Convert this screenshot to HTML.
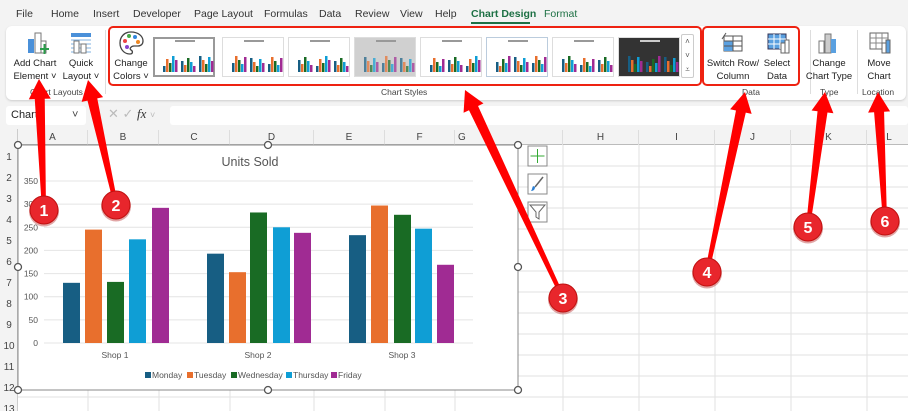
<!DOCTYPE html>
<html><head><meta charset="utf-8"><style>
*{margin:0;padding:0;box-sizing:border-box}
body{width:908px;height:411px;overflow:hidden;background:#f3f3f3;font-family:"Liberation Sans",sans-serif;position:relative;color:#222}
.a{position:absolute}
.tab{position:absolute;top:8px;font-size:10.5px;color:#333;white-space:nowrap}
.rb{position:absolute;font-size:9.5px;text-align:center;line-height:13px;color:#222;white-space:nowrap}
.gl{position:absolute;font-size:8.5px;color:#444;top:87px;white-space:nowrap}
.th{position:absolute;top:37px;width:62px;height:40px;background:#fff;border:1px solid #ddd}
.col{position:absolute;top:130px;height:15px;font-size:10px;color:#444;text-align:center;line-height:15px;border-right:1px solid #ddd}
</style></head><body>
<div class="tab" style="left:16px">File</div>
<div class="tab" style="left:51px">Home</div>
<div class="tab" style="left:93px">Insert</div>
<div class="tab" style="left:133px">Developer</div>
<div class="tab" style="left:194px">Page Layout</div>
<div class="tab" style="left:264px">Formulas</div>
<div class="tab" style="left:319px">Data</div>
<div class="tab" style="left:355px">Review</div>
<div class="tab" style="left:400px">View</div>
<div class="tab" style="left:435px">Help</div>
<div class="tab" style="left:471px;color:#1d7044;font-weight:bold">Chart Design</div>
<div class="a" style="left:471px;top:22px;width:59px;height:2px;background:#1d7044"></div>
<div class="tab" style="left:544px;color:#1d7044">Format</div>
<div class="a" style="left:6px;top:26px;width:900px;height:74px;background:#fff;border-radius:6px;box-shadow:0 1px 2px #ccc"></div>
<div class="a" style="left:105px;top:30px;width:1px;height:64px;background:#ddd"></div>
<div class="a" style="left:810px;top:30px;width:1px;height:64px;background:#ddd"></div>
<div class="a" style="left:857px;top:30px;width:1px;height:64px;background:#ddd"></div>
<svg class="a" style="left:26px;top:31px" width="24" height="24"><rect x="2" y="8" width="6" height="14" fill="#4a90d9"/><rect x="9" y="2" width="6" height="20" fill="#fff" stroke="#777"/><rect x="15" y="10" width="5" height="12" fill="#fff" stroke="#777"/><path d="M14 18h9M18.5 13v10" stroke="#2a9d4a" stroke-width="2"/></svg>
<svg class="a" style="left:69px;top:31px" width="24" height="24"><rect x="2" y="2" width="20" height="4" fill="#4a90d9"/><path d="M2 9h20M2 13h20M2 17h20M2 21h20" stroke="#7fb0e0"/><rect x="5" y="10" width="5" height="12" fill="#fff" stroke="#777"/><rect x="12" y="13" width="5" height="9" fill="#fff" stroke="#777"/></svg>
<div class="rb" style="left:10px;top:57px;width:50px">Add Chart<br>Element ˅</div>
<div class="rb" style="left:60px;top:57px;width:42px">Quick<br>Layout ˅</div>
<div class="gl" style="left:30px">Chart Layouts</div>
<svg class="a" style="left:118px;top:30px" width="26" height="26"><path d="M13 2C6 2 2 7 2 13s4 11 10 11c3 0 3-3 1-4s0-4 3-4h4c3 0 5-2 5-5C25 6 20 2 13 2z" fill="#fff" stroke="#444" stroke-width="1.3"/><circle cx="7" cy="11" r="2" fill="#e44"/><circle cx="11" cy="6" r="2" fill="#4a4"/><circle cx="17" cy="7" r="2" fill="#38d"/><circle cx="20" cy="12" r="2" fill="#e82"/><circle cx="9" cy="17" r="2" fill="#84c"/></svg>
<div class="rb" style="left:110px;top:57px;width:42px">Change<br>Colors ˅</div>
<div class="th" style="left:153px;border:2px solid #999"></div>
<div class="th" style="left:222px"></div>
<div class="th" style="left:288px"></div>
<div class="th" style="left:354px;background:#d0d0d0"></div>
<div class="th" style="left:420px"></div>
<div class="th" style="left:486px;border-color:#bcd"></div>
<div class="th" style="left:552px"></div>
<div class="th" style="left:618px;background:#333"></div>
<svg class="a" style="left:0;top:0" width="700" height="80" id="thumbs"></svg>
<div class="a" style="left:681px;top:34px;width:13px;height:44px;border:1px solid #ccc;border-radius:2px;background:#fff;font-size:8px;text-align:center;line-height:14px;color:#555">˄<br>˅<br>⩡</div>
<div class="gl" style="left:381px">Chart Styles</div>
<svg class="a" style="left:720px;top:31px" width="24" height="24"><rect x="4" y="5" width="18" height="15" fill="#fff" stroke="#555"/><rect x="4" y="10" width="9" height="10" fill="#5aa0e0"/><path d="M4 10h18M4 15h18M13 5v15" stroke="#555"/><path d="M2 8l4-6" stroke="#555"/></svg>
<svg class="a" style="left:766px;top:31px" width="24" height="24"><rect x="2" y="3" width="18" height="15" fill="#5aa0e0" stroke="#335"/><path d="M2 8h18M2 13h18M8 3v15M14 3v15" stroke="#fff"/><rect x="15" y="12" width="4" height="10" fill="#fff" stroke="#666"/><rect x="19" y="9" width="4" height="13" fill="#fff" stroke="#666"/></svg>
<div class="rb" style="left:704px;top:57px;width:58px">Switch Row/<br>Column</div>
<div class="rb" style="left:760px;top:57px;width:34px">Select<br>Data</div>
<div class="gl" style="left:742px">Data</div>
<svg class="a" style="left:816px;top:31px" width="24" height="24"><rect x="3" y="10" width="5" height="12" fill="#fff" stroke="#777"/><rect x="9" y="3" width="6" height="19" fill="#ccc" stroke="#777"/><rect x="15" y="8" width="5" height="14" fill="#5aa0e0"/></svg>
<div class="rb" style="left:801px;top:57px;width:56px">Change<br>Chart Type</div>
<div class="gl" style="left:820px">Type</div>
<svg class="a" style="left:868px;top:31px" width="24" height="24"><rect x="2" y="2" width="18" height="16" fill="#fff" stroke="#666"/><path d="M2 7h18M2 12h18M8 2v16M14 2v16" stroke="#888"/><rect x="14" y="12" width="4" height="10" fill="#fff" stroke="#666"/><rect x="18" y="9" width="4" height="13" fill="#5aa0e0" stroke="#666"/></svg>
<div class="rb" style="left:860px;top:57px;width:38px">Move<br>Chart</div>
<div class="gl" style="left:862px">Location</div>
<div class="a" style="left:108px;top:26px;width:594px;height:60px;border:2px solid #e21;border-radius:5px"></div>
<div class="a" style="left:702px;top:26px;width:98px;height:60px;border:2px solid #e21;border-radius:5px"></div>
<div class="a" style="left:6px;top:106px;width:80px;height:19px;background:#fff;border-radius:3px;font-size:11px;line-height:19px;padding-left:5px">Chart<span style="position:absolute;left:66px;color:#444">˅</span></div>
<div class="a" style="left:108px;top:106px;font-size:13px;color:#bbb;white-space:nowrap">✕ ✓ <i style="color:#333;font-family:'Liberation Serif'">fx</i> <span style="font-size:9px">˅</span></div>
<div class="a" style="left:170px;top:106px;width:738px;height:19px;background:#fff;border-radius:3px"></div>
<div class="a" style="left:0;top:129px;width:908px;height:282px;background:#fff"></div>
<div class="a" style="left:0;top:129px;width:908px;height:16px;background:#f3f3f3;border-bottom:1px solid #bbb"></div>
<div class="a" style="left:0;top:129px;width:18px;height:282px;background:#f3f3f3;border-right:1px solid #ccc"></div>
<div class="col" style="left:18px;width:70px">A</div><div class="col" style="left:88px;width:71px">B</div><div class="col" style="left:159px;width:71px">C</div><div class="col" style="left:230px;width:84px">D</div><div class="col" style="left:314px;width:71px">E</div><div class="col" style="left:385px;width:70px">F</div><div class="col" style="left:455px;width:108px;text-align:left;padding-left:3px">G</div><div class="col" style="left:563px;width:76px">H</div><div class="col" style="left:639px;width:76px">I</div><div class="col" style="left:715px;width:76px">J</div><div class="col" style="left:791px;width:76px">K</div><div class="col" style="left:867px;width:45px">L</div>
<svg class="a" style="left:0;top:0" width="908" height="411" id="ch" font-family="Liberation Sans, sans-serif"></svg>
<script>
var ns="http://www.w3.org/2000/svg";
function el(p,t,a,txt){var e=document.createElementNS(ns,t);for(var k in a)e.setAttribute(k,a[k]);if(txt!=null)e.textContent=txt;p.appendChild(e);return e}
var g=document.getElementById('ch');
var cols=[88,159,230,314,385,455,563,639,715,791,867];
for(var r=0;r<13;r++){var y=145+21*(r+1);el(g,'line',{x1:18,y1:y,x2:908,y2:y,stroke:'#e2e2e2'});el(g,'text',{x:9,y:y-6,'font-size':10,fill:'#444','text-anchor':'middle'},r+1)}
cols.forEach(function(x){el(g,'line',{x1:x,y1:145,x2:x,y2:411,stroke:'#e2e2e2'})});
el(g,'rect',{x:18,y:145,width:500,height:245,fill:'#fff',stroke:'#888'});
el(g,'text',{x:250,y:166,'font-size':12.5,fill:'#555','text-anchor':'middle'},'Units Sold');
var base=343,sc=162/350;
for(var v=0;v<=350;v+=50){var y=base-v*sc;el(g,'line',{x1:44,y1:y,x2:473,y2:y,stroke:'#e4e4e4'});el(g,'text',{x:38,y:y+3,'font-size':8.5,fill:'#555','text-anchor':'end'},v)}
var colors=['#175e83','#e86f2d','#196b24','#0f9ed5','#a02b93'];
var xs=[[63,85,107,129,152],[207,229,250,273,294],[349,371,394,415,437]];
var vals=[[130,245,132,224,292],[193,153,282,250,238],[233,297,277,247,169]];
for(var s=0;s<3;s++){for(var i=0;i<5;i++){var h=vals[s][i]*sc;el(g,'rect',{x:xs[s][i],y:base-h,width:17,height:h,fill:colors[i]})}
el(g,'text',{x:[115,258,402][s],y:358,'font-size':8.5,fill:'#555','text-anchor':'middle'},'Shop '+(s+1))}
var lg=[['Monday',145],['Tuesday',187],['Wednesday',231],['Thursday',286],['Friday',331]];
lg.forEach(function(l,i){el(g,'rect',{x:l[1],y:372,width:6,height:6,fill:colors[i]});el(g,'text',{x:l[1]+7,y:378,'font-size':8.5,fill:'#555'},l[0])});
[[18,145],[268,145],[518,145],[18,267],[518,267],[18,390],[268,390],[518,390]].forEach(function(p){el(g,'circle',{cx:p[0],cy:p[1],r:3.5,fill:'#fff',stroke:'#555','stroke-width':1.3})});
[146,174,202].forEach(function(y){el(g,'rect',{x:528,y:y,width:19,height:20,fill:'#fff',stroke:'#888'})});
el(g,'path',{d:'M537.5 149v14M530.5 156h14',stroke:'#3a3','stroke-width':1});
el(g,'path',{d:'M543 177l-8 10',stroke:'#666','stroke-width':1.5});el(g,'path',{d:'M531 191c2 0 4-1 4-4l-2-1c-1 2-1 4-2 5z',fill:'#2a7fd4'});
el(g,'path',{d:'M530 205h15l-6 7v7l-3-2v-5z',fill:'none',stroke:'#666'});
var t=document.getElementById('thumbs');
[155,224,290,356,422,488,554,620].forEach(function(x0,k){for(var s=0;s<3;s++)for(var i=0;i<5;i++){var h=6+((i*7+s*5+k*3)%11);el(t,'rect',{x:x0+8+s*18+i*3,y:72-h,width:2.5,height:h,fill:colors[i],opacity:k==3?0.7:1})}
el(t,'rect',{x:x0+20,y:40,width:20,height:2,fill:k==7?'#ccc':'#999'})});
function arrow(cx,cy,tx,ty,n){var dx=tx-cx,dy=ty-cy,L=Math.sqrt(dx*dx+dy*dy),ux=dx/L,uy=dy/L,px=-uy,py=ux;
var hx=tx-ux*20,hy=ty-uy*20;
var pts=[[cx+px*2,cy+py*2],[hx+px*5,hy+py*5],[hx+px*11,hy+py*11],[tx,ty],[hx-px*11,hy-py*11],[hx-px*5,hy-py*5],[cx-px*2,cy-py*2]];
el(g,'polygon',{points:pts.map(function(p){return p.join(',')}).join(' '),fill:'#f00'});
el(g,'circle',{cx:cx,cy:cy+1.5,r:15,fill:'#a00',opacity:0.35});
el(g,'circle',{cx:cx,cy:cy,r:14,fill:'#e8262c',stroke:'#c01010','stroke-width':1});
el(g,'text',{x:cx,y:cy+6,'font-size':16,fill:'#fff','text-anchor':'middle','font-weight':'bold'},n)}
arrow(44,210,39,79,1);arrow(116,205,88,80,2);arrow(563,298,465,90,3);arrow(707,272,745,92,4);arrow(808,227,825,92,5);arrow(885,221,878,92,6);
</script>
</body></html>
